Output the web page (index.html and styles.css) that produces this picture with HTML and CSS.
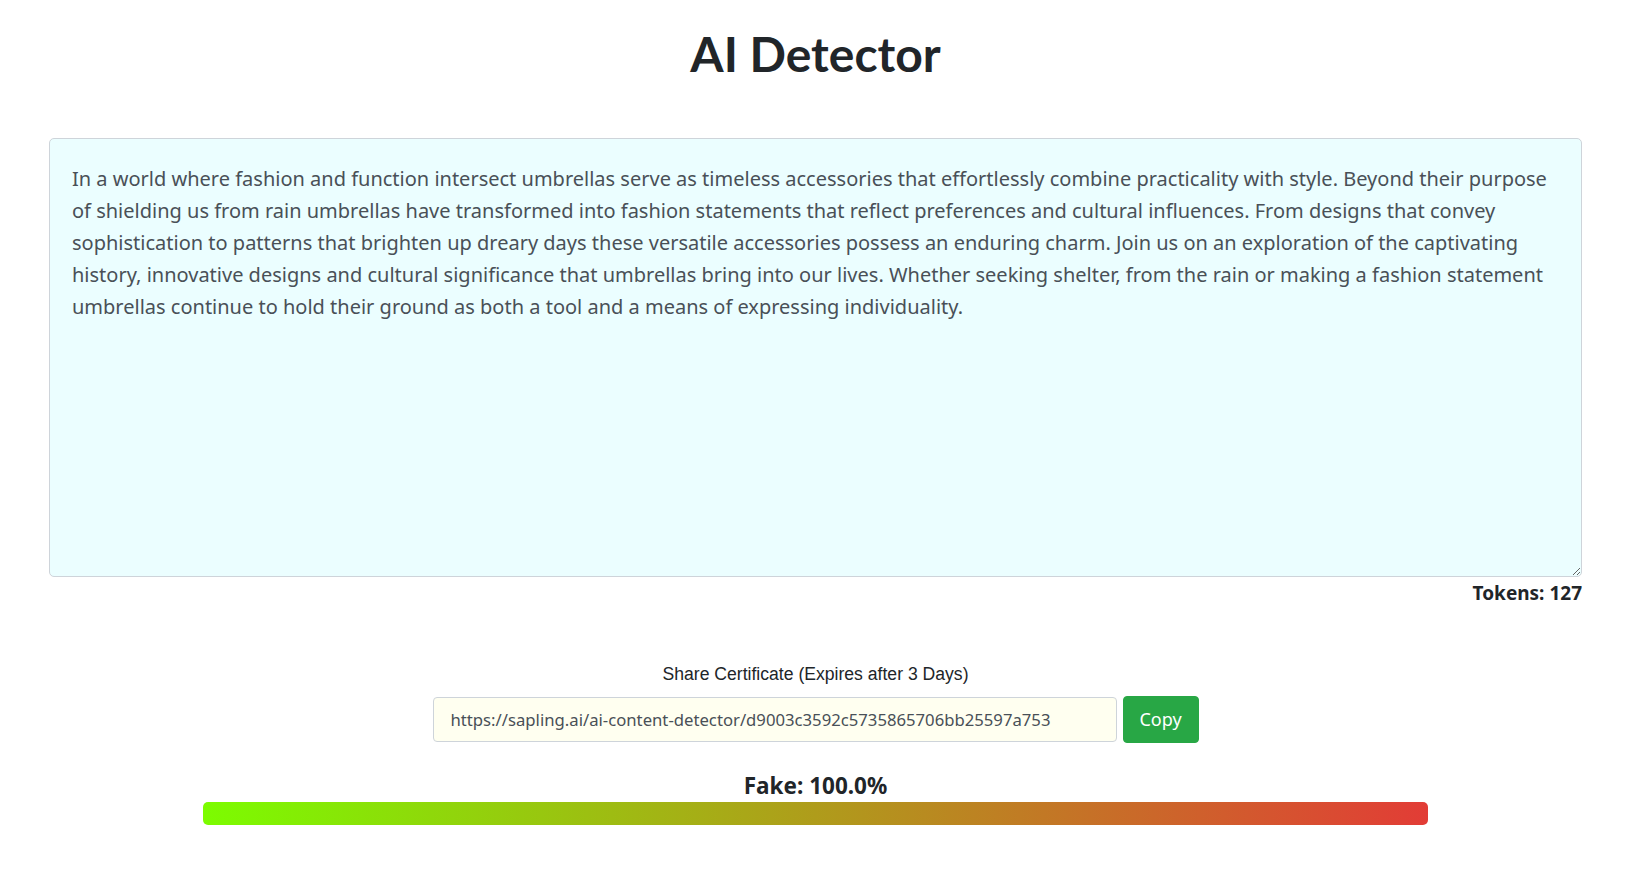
FILE: index.html
```html
<!DOCTYPE html>
<html lang="en">
<head>
<meta charset="utf-8">
<title>AI Detector</title>
<link rel="stylesheet" href="styles.css">
</head>
<body>
<div class="page">
  <h1 class="title">AI Detector</h1>
  <div class="editor">
    <textarea class="input-text" spellcheck="false">In a world where fashion and function intersect umbrellas serve as timeless accessories that effortlessly combine practicality with style. Beyond their purpose
of shielding us from rain umbrellas have transformed into fashion statements that reflect preferences and cultural influences. From designs that convey
sophistication to patterns that brighten up dreary days these versatile accessories possess an enduring charm. Join us on an exploration of the captivating
history, innovative designs and cultural significance that umbrellas bring into our lives. Whether seeking shelter, from the rain or making a fashion statement
umbrellas continue to hold their ground as both a tool and a means of expressing individuality.</textarea>
    <div class="tokens">Tokens: 127</div>
  </div>
  <div class="share">
    <div class="share-label">Share Certificate (Expires after 3 Days)</div>
    <div class="share-row">
      <input class="share-url" type="text" value="https://sapling.ai/ai-content-detector/d9003c3592c5735865706bb25597a753" readonly>
      <button class="copy-btn" type="button">Copy</button>
    </div>
  </div>
  <div class="result">
    <div class="result-label">Fake: 100.0%</div>
    <div class="bar"></div>
  </div>
</div>
</body>
</html>
```
FILE: styles.css
```css
html, body {
  margin: 0;
  padding: 0;
  background: #ffffff;
}
body {
  font-family: "Noto Sans", "Open Sans", sans-serif;
  color: #212529;
}
.page {
  width: 1631px;
  box-sizing: border-box;
  padding: 0 49px;
}
.title {
  margin: 25px 0 0;
  text-align: center;
  font-family: "Lato", sans-serif;
  font-weight: 700;
  font-size: 48px;
  line-height: 1.2;
  color: #212529;
}
.editor {
  margin-top: 55px;
  display: flex;
  flex-direction: column;
}
.input-text {
  display: block;
  box-sizing: border-box;
  width: 100%;
  height: 439px;
  margin: 0;
  padding: 24px 22px;
  border: 1px solid #ced4da;
  border-radius: 5px;
  background: #ebfeff;
  color: #495057;
  font-family: "Noto Sans", "Open Sans", sans-serif;
  font-size: 20px;
  line-height: 32.2px;
  white-space: pre-wrap;
  resize: vertical;
  outline: none;
  overflow: hidden;
}
.tokens {
  align-self: flex-end;
  font-weight: 700;
  font-size: 19px;
  line-height: 24px;
  margin-top: 4px;
  color: #212529;
}
.share {
  margin-top: 58px;
  display: flex;
  flex-direction: column;
  align-items: center;
}
.share-label {
  font-family: "Liberation Sans", Arial, sans-serif;
  font-size: 17.6px;
  line-height: 22px;
  color: #212529;
}
.share-row {
  margin-top: 11px;
  display: flex;
  gap: 6px;
  align-items: center;
}
.share-url {
  box-sizing: border-box;
  width: 684px;
  height: 45px;
  margin: 0;
  padding: 0 17px;
  border: 1px solid #ced4da;
  border-radius: 4px;
  background: #fffff0;
  color: #495057;
  font-family: "Noto Sans", "Open Sans", sans-serif;
  font-size: 16.7px;
  outline: none;
}
.copy-btn {
  box-sizing: border-box;
  width: 76px;
  height: 47px;
  margin: 0;
  border: 1px solid #28a745;
  border-radius: 4px;
  background: #28a745;
  color: #ffffff;
  font-family: "Noto Sans", "Open Sans", sans-serif;
  font-size: 18px;
  cursor: pointer;
}
.result {
  margin-top: 29px;
  display: flex;
  flex-direction: column;
  align-items: center;
}
.result-label {
  font-weight: 700;
  font-size: 22.5px;
  line-height: 28px;
  color: #212529;
}
.bar {
  margin-top: 2px;
  width: 1225px;
  height: 23px;
  border-radius: 5px;
  background: linear-gradient(to right, #7cfc00, #e23c36);
}
```
